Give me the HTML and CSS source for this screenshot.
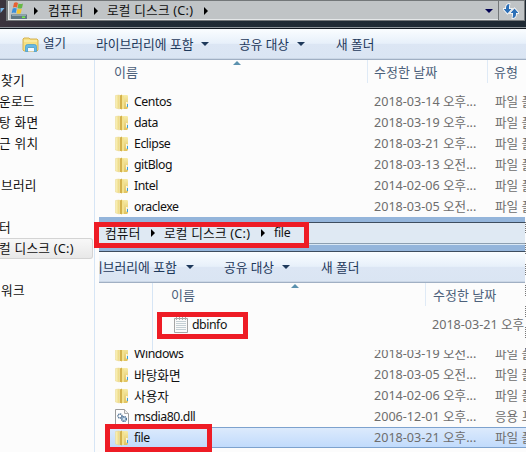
FILE: index.html
```html
<!DOCTYPE html>
<html lang="ko">
<head>
<meta charset="utf-8">
<title>로컬 디스크 (C:)</title>
<link rel="stylesheet" href="styles.css">
</head>
<body>
<svg class="defs" aria-hidden="true">
  <defs>
    <linearGradient id="gold" x1="0" x2="1" y1="0" y2="0"><stop offset="0" stop-color="#fbf5c4"/><stop offset="1" stop-color="#ecd579"/></linearGradient>
    <linearGradient id="gold2" x1="0" x2="0" y1="0" y2="1"><stop offset="0" stop-color="#f7eca8"/><stop offset="1" stop-color="#e0c25f"/></linearGradient>
  </defs>
  <symbol id="folder" viewBox="0 0 14 16">
    <path d="M5 1h7.4l.6 1v12l-1 1H5z" fill="url(#gold2)"/>
    <path d="M.5 1.5 4.5 1v14l-4-1z" fill="url(#gold)" stroke="#e8d483" stroke-width=".5"/>
    <path d="M5 1.5 7 .4v15l-2-.6z" fill="#d3b14b"/>
    <path d="M7 1.5 9 2v13H7z" fill="#f3e28f"/>
    <path d="M11.2 8h1.3v4.5h-1.3z" fill="#fff"/><path d="M12 10h1v3h-1z" fill="#38a0dc"/>
  </symbol>
  <symbol id="sheet" viewBox="0 0 14 16">
    <path d="M.5 1.5h13v14H.5z" fill="#fafafa" stroke="#a5a5a5"/>
    <path d="M2 4.5h10M2 6.5h10M2 8.5h10M2 10.5h10M2 12.5h10" stroke="#c4cfd4"/>
    <path d="M2.5 0v3M5.5 0v3M8.5 0v3M11.5 0v3" stroke="#aaa"/>
  </symbol>
  <symbol id="dll" viewBox="0 0 14 16">
    <path d="M.5.5h9l4 4v11H.5z" fill="#fdfdfd" stroke="#9b9b9b"/><path d="M9.5.5v4h4" fill="#eee" stroke="#aaa"/>
    <circle cx="5" cy="7" r="2" fill="#fff" stroke="#587899" stroke-width="1.5" stroke-dasharray="1.2 .5"/>
    <circle cx="9" cy="10" r="2.3" fill="#cfe0ee" stroke="#416a92" stroke-width="1.5" stroke-dasharray="1.2 .5"/>
  </symbol>
</svg>

<div class="window">
  <header class="address">
    <svg class="nav" width="5" height="8" viewBox="0 0 5 8"><path d="M0 1h4L0 6z" fill="#78b6e8"/></svg>
    <div class="address-box">
      <svg class="drive" width="18" height="18" viewBox="0 0 18 18">
        <path d="M2 10h12l3 3v4H1v-4z" fill="#b8c4c9"/><path d="M1 12.5h16V17H1z" fill="#607883"/><path d="M2 13h14v1H2z" fill="#8fa6af"/><path d="M12 14.5h3v1.5h-3z" fill="#71f044"/>
        <path d="M4 1q2-1.5 4 0L7 5.5Q5 4.500 3 5.500z" fill="#e66032"/><path d="M8.500 1.500q2 1 4.500 0l-1 4.500q-2 1-4.500 0z" fill="#67b845"/><path d="M2.700 6.500q2-1 4 0l-1 4.500Q4 10 1.700 11z" fill="#398edb"/><path d="M7.500 6.800q2 1 4.300 0l-1 4.500q-2 1-4.300 0z" fill="#f5c52e"/>
      </svg>
      <i class="tri"></i><span class="c1">컴퓨터</span>
      <i class="tri"></i><span class="c2">로컬 디스크 (C:)</span>
      <i class="tri"></i>
      <i class="drop"></i>
    </div>
    <div class="refresh">
      <svg width="16" height="16" viewBox="0 0 16 16"><g stroke="#fff" stroke-width="1.6" fill="#2c6fb6" paint-order="stroke"><path d="M6.500 1Q3 1 3 5v1H.5l4 4.500 4-4.500H6V4z"/><path d="M9.500 15q3.500 0 3.500-4v-1h2.500l-4-4.500-4 4.500H10v2z"/></g></svg>
    </div>
  </header>

  <nav class="toolbar">
    <svg class="open" width="17" height="15" viewBox="0 0 17 15"><path d="M1 2 2 1h5l1 1h7l1 1v10l-1 1H2l-1-1z" fill="#f5df82" stroke="#d6b352"/><path d="M2 4h13" stroke="#fff3b8"/><path d="M3.5 14.5v-5q0-2 2-2h7q2 0 2 2v5h-2.5v-4H6v4z" fill="#67b9e5" stroke="#409bd0" stroke-width=".7"/><path d="M6 11h6v3H6z" fill="#f4faff"/></svg>
    <span class="t1">열기</span><span class="t2">라이브러리에 포함</span><i class="caret"></i><span class="t3">공유 대상</span><i class="caret"></i><span class="t4">새 폴더</span>
  </nav>

  <div class="content">
    <aside class="side">
      <div class="s-in">찾기</div>
      <div class="s-out">운로드</div>
      <div class="s-out">탕 화면</div>
      <div class="s-out">근 위치</div>
      <div class="gap"></div>
      <div class="s-in">브러리</div>
      <div class="gap"></div>
      <div class="s-out">터</div>
      <div class="s-out current">컬 디스크 (C:)</div>
      <div class="gap"></div>
      <div class="s-in">워크</div>
    </aside>
    <main class="list">
      <div class="head"><span>이름</span><span>수정한 날짜</span><span>유형</span><i class="sort"></i></div>
      <div class="row"><svg><use href="#folder"/></svg><b>Centos</b><time>2018-03-14 오후...</time><em>파일 폴더</em></div>
      <div class="row"><svg><use href="#folder"/></svg><b>data</b><time>2018-03-19 오후...</time><em>파일 폴더</em></div>
      <div class="row"><svg><use href="#folder"/></svg><b>Eclipse</b><time>2018-03-21 오후...</time><em>파일 폴더</em></div>
      <div class="row"><svg><use href="#folder"/></svg><b>gitBlog</b><time>2018-03-13 오전...</time><em>파일 폴더</em></div>
      <div class="row"><svg><use href="#folder"/></svg><b>Intel</b><time>2014-02-06 오후...</time><em>파일 폴더</em></div>
      <div class="row"><svg><use href="#folder"/></svg><b>oraclexe</b><time>2018-03-05 오전...</time><em>파일 폴더</em></div>
      <div class="middle"><i></i><i></i><i></i><i></i><i></i><i></i></div>
      <div class="row"><svg><use href="#folder"/></svg><b>Windows</b><time>2018-03-19 오전...</time><em>파일 폴더</em></div>
      <div class="row"><svg><use href="#folder"/></svg><b class="ko">바탕화면</b><time>2018-03-05 오전...</time><em>파일 폴더</em></div>
      <div class="row"><svg><use href="#folder"/></svg><b class="ko">사용자</b><time>2014-02-06 오후...</time><em>파일 폴더</em></div>
      <div class="row"><svg><use href="#dll"/></svg><b>msdia80.dll</b><time>2006-12-01 오후...</time><em>응용 프로</em></div>
      <div class="row selected"><svg><use href="#folder"/></svg><b>file</b><time>2018-03-21 오후...</time><em>파일 폴더</em></div>
    </main>
  </div>

  <section class="inset">
    <div class="band"></div>
    <div class="inset-path">
      <span class="c1">컴퓨터</span><i class="tri"></i><span class="c2">로컬 디스크 (C:)</span><i class="tri"></i><span class="c3">file</span>
    </div>
    <div class="band low"></div>
    <nav class="toolbar inset-tools"><span class="t2">이브러리에 포함</span><i class="caret"></i><span class="t3">공유 대상</span><i class="caret"></i><span class="t4">새 폴더</span></nav>
    <div class="inset-list">
      <div class="inset-head"><span>이름</span><span>수정한 날짜</span><i class="sort"></i></div>
      <div class="inset-row"><svg><use href="#sheet"/></svg><b>dbinfo</b><time>2018-03-21 오후</time></div>
    </div>
  </section>
  <div class="mark mark-path"></div>
  <div class="mark mark-info"></div>
  <div class="mark mark-file"></div>
</div>
</body>
</html>
```

FILE: styles.css
```css
* { box-sizing: border-box; }
body { margin: 0; overflow: hidden; background: #fcfcfc; font: 13px/21px "Noto Sans", "Noto Sans CJK KR", sans-serif; color: #111; }
span, b, time, em { font-weight: normal; font-style: normal; white-space: nowrap; line-height: 20px; }
i { display: block; flex: none; }
svg { flex: none; display: block; }
.defs { position: absolute; width: 0; height: 0; }
.window { position: relative; width: 526px; height: 452px; overflow: hidden; }

.address { display: flex; height: 29px; background: linear-gradient(90deg, #3b343e, #202b35 25%, #1e2933); border-bottom: 1px solid #111820; box-shadow: inset 0 -1px #8d9499; }
.nav { margin-top: 7px; width: 6px; }
.address-box { display: flex; align-items: center; width: 493px; height: 21px; border: solid #737779; border-width: 1px 1px 1px 2px; background: #c0c4c6; box-shadow: inset 1px -1px #e4e7e8; padding-left: 2px; font-size: 12.7px; }
.drive { margin-right: 6px; }
.address-box span { padding-bottom: 1px; }
.tri { width: 0; height: 0; border: solid transparent; border-width: 4px 0 4px 4px; border-left-color: #000; }
.c1, .c2 { letter-spacing: .2px; }
.address .c1 { width: 46px; margin-left: 10px; }
.address .c2 { width: 97px; margin-left: 9px; }
.drop { width: 0; height: 0; border: 4px solid transparent; border-top-color: #000052; border-bottom: 0; margin-left: auto; margin-right: 5px; }
.refresh { width: 26px; height: 21px; padding: 2px 4px; background: #c0c4c6; border: 1px solid #737779; border-left: 0; }

.toolbar { display: flex; align-items: center; height: 31px; background: linear-gradient(#fafdff, #e7f0fa 48%, #dce6f4 50%, #dae5f3); border-bottom: 1px solid #a0afc3; box-shadow: inset 0 -1px #cbd7e6; color: #1e395b; }
.open { margin: 0 4px 0 22px; }
.caret { width: 0; height: 0; border: 4px solid transparent; border-top-color: #1e395b; border-bottom: 0; }
.t1 { width: 53px; font-size: 12.5px; }
.t2 { width: 105px; font-size: 12.8px; }
.t3 { margin-left: 30px; width: 58px; font-size: 12.7px; }
.t4 { margin-left: 31px; font-size: 12.7px; }

.content { display: flex; height: 392px; }
.side { width: 95px; border-right: 1px solid #d6e5f5; padding-top: 10px; overflow: hidden; font-size: 12.7px; letter-spacing: .25px; white-space: nowrap; }
.side div { height: 21px; line-height: 21px; }
.s-in { padding-left: 1px; }
.s-out { text-indent: -1px; }
.side .current { width: 93px; border: 1px solid #d4d4d4; border-left: 0; border-radius: 0 3px 3px 0; background: linear-gradient(#f8f8f8, #e8e8e8); line-height: 19px; }

.list { width: 431px; overflow: hidden; }
.head { position: relative; display: grid; grid-template-columns: 253px 120px 39px; padding-left: 19px; height: 31px; color: #4c607a; }
.head span { line-height: 25px; height: 23px; }
.head span + span { box-shadow: inset 1px 0 #dfeaf6; padding-left: 7px; }
.sort { position: absolute; top: 1px; left: 138px; width: 0; height: 0; border: 4px solid transparent; border-bottom-color: #5b91ae; border-top: 0; }
.row { display: grid; grid-template-columns: 19px 240px 121px 60px; align-items: center; height: 21px; padding-left: 20px; }
.row svg, .inset-row svg { width: 14px; height: 16px; }
.row b, .inset-row b { font-size: 12.3px; letter-spacing: -.45px; }
.row .ko { font-size: 12.7px; letter-spacing: 0; }
time, em { color: #6d6d6d; font-size: 12.6px; }
.middle { height: 126px; }
.middle i { width: 1px; height: 12px; margin: 0 0 9px auto; background: repeating-linear-gradient(#777 0 1px, transparent 1px 2px); transform: translateY(5px); }
.selected { border: 1px solid #7da2ce; border-width: 1px 0; background: linear-gradient(#dceafc, #c1dbfc); margin-left: 15px; padding-left: 5px; }

.inset { position: absolute; left: 99px; top: 217px; width: 426px; height: 133px; overflow: hidden; background: #fcfcfc; }
.band { height: 6px; background: #94b5db; border-bottom: 1px solid #3d4d5f; }
.low { height: 9px; border-top: 1px solid #8d9fb0; box-shadow: inset 0 1px #d8e7f5; }
.inset-path { display: flex; align-items: center; height: 20px; background: #dfe9f3; padding-left: 6px; font-size: 12.7px; }
.inset-path .c1 { width: 46px; }
.inset-path .c2 { margin-left: 9px; width: 97px; }
.inset-path .c3 { margin-left: 9px; font-size: 12.3px; letter-spacing: -.3px; }
.inset-tools { margin-left: -8px; height: 31px; }
.inset-tools .t2 { width: 95px; }
.inset-list { margin-left: 53px; border-left: 1px solid #d6e5f5; height: 68px; }
.inset-head { position: relative; display: grid; grid-template-columns: 254px 100px; padding-left: 18px; height: 31px; color: #4c607a; }
.inset-head span { height: 23px; line-height: 25px; }
.inset-head span + span { box-shadow: inset 1px 0 #dfeaf6; padding-left: 8px; }
.inset-row { display: grid; grid-template-columns: 18px 240px 110px; align-items: center; height: 21px; padding-left: 21px; }

.mark { position: absolute; border: 5px solid #ee1c25; }
.mark-path { left: 94px; top: 222px; width: 215px; height: 26px; }
.mark-info { left: 157px; top: 312px; width: 91px; height: 27px; }
.mark-file { left: 105px; top: 424px; width: 107px; height: 28px; }
```
